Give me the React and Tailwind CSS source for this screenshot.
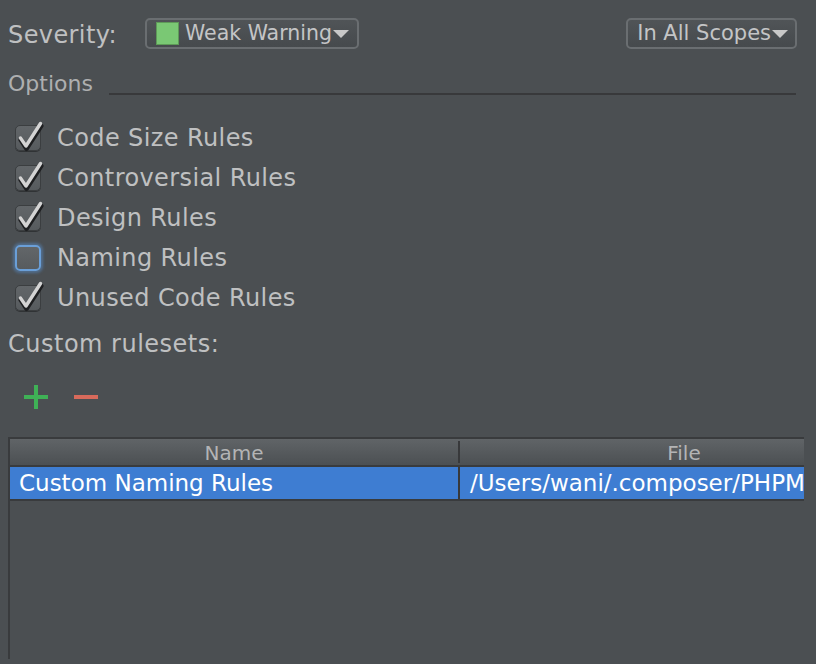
import React from "react";

const font = { fontFamily: '"DejaVu Sans", "Liberation Sans", sans-serif' };

const rules = [
  { label: "Code Size Rules", checked: true },
  { label: "Controversial Rules", checked: true },
  { label: "Design Rules", checked: true },
  { label: "Naming Rules", checked: false, focused: true },
  { label: "Unused Code Rules", checked: true },
];

const Checkbox = ({ checked, focused }) => (
  <div className="relative w-[28px] h-[28px]">
    <div
      className={`absolute left-[1px] top-[1px] w-[26px] h-[26px] rounded-[5px] bg-gradient-to-b from-[#626669] to-[#575b5e] ${
        focused
          ? "border-2 border-[#6a9fd8] shadow-[0_0_3px_2px_rgba(90,150,220,0.45)]"
          : "border border-[#3b3e40] shadow-[0_1px_0_rgba(0,0,0,0.35)]"
      }`}
    />
    {checked && (
      <svg
        className="absolute left-0 top-[-4px] overflow-visible"
        width="30"
        height="32"
        viewBox="0 0 30 32"
      >
        <path
          d="M7 20 L12.5 28.5 L27 6"
          fill="none"
          stroke="#1e1f21"
          strokeWidth="5"
          strokeLinecap="round"
          strokeLinejoin="round"
        />
        <path
          d="M6.5 18 L12 26 L26.5 3.5"
          fill="none"
          stroke="#d4d4d4"
          strokeWidth="3.4"
          strokeLinecap="round"
          strokeLinejoin="round"
        />
      </svg>
    )}
  </div>
);

const Combo = ({ children, className }) => (
  <div
    className={`h-[31px] flex items-center rounded-[5px] border-2 border-[#6a6e71] bg-gradient-to-b from-[#505457] to-[#464a4d] whitespace-nowrap ${className}`}
  >
    {children}
    <svg width="16" height="9" viewBox="0 0 16 9" className="ml-[1px] mt-[1px] shrink-0">
      <path d="M0 0 H16 L8 8 Z" fill="#c8c8c8" />
    </svg>
  </div>
);

export default function App() {
  return (
    <div
      className="w-[816px] h-[664px] bg-[#4b4f52] text-[#bfc0c1] overflow-hidden relative"
      style={font}
    >
      {/* severity row */}
      <div className="flex items-center h-[49px] pt-[18px] pl-[8px] pr-[19px]">
        <span className="text-[24px] tracking-[0.4px] h-[31px] pt-[3px] leading-[28px] w-[137px]">
          Severity:
        </span>
        <Combo className="pl-[9px] pr-[8px]">
          <div className="w-[23px] h-[23px] bg-[#7ac874] border border-[#5e9a58] mr-[6px] shrink-0" />
          <span className="text-[20.5px] leading-[27px] text-[#c4c5c6]">Weak Warning</span>
        </Combo>
        <div className="flex-1" />
        <Combo className="pl-[9px] pr-[7px]">
          <span className="text-[21px] leading-[27px] text-[#c4c5c6]">In All Scopes</span>
        </Combo>
      </div>

      {/* options header */}
      <div className="flex items-end mt-[22px] pl-[8px] pr-[20px] h-[26px]">
        <span className="text-[22px] leading-[26px] text-[#aeafb0]">Options</span>
        <div className="flex-1 ml-[16px] mb-[2px] h-[2px] bg-[#38393b]" />
      </div>

      {/* rule checkboxes */}
      <div className="flex flex-col mt-[21px] pl-[14px]">
        {rules.map((r) => (
          <div key={r.label} className="flex items-center h-[40px]">
            <Checkbox checked={r.checked} focused={r.focused} />
            <span className="ml-[15px] text-[24px] tracking-[0.4px] leading-[30px]">{r.label}</span>
          </div>
        ))}
      </div>

      {/* custom rulesets */}
      <div className="pl-[8px] mt-[10px] text-[24px] tracking-[0.5px] leading-[32px]">
        Custom rulesets:
      </div>

      <div className="flex items-center h-[30px] mt-[22px] pl-[24px] gap-[26px]">
        <svg width="24" height="24" viewBox="0 0 24 24">
          <path d="M12 0 V24 M0 12 H24" stroke="#3fb156" strokeWidth="4" />
        </svg>
        <svg width="24" height="24" viewBox="0 0 24 24">
          <path d="M0 12 H24" stroke="#d86a5b" strokeWidth="4" />
        </svg>
      </div>

      {/* table */}
      <div className="ml-[8px] mt-[25px] w-[796px] h-[222px] overflow-hidden border-t-2 border-l-2 border-[#393b3d]">
        <div className="w-[900px]">
          <div className="flex h-[28px] bg-gradient-to-b from-[#606467] to-[#4c5053] border-b-2 border-[#393b3d] text-[20px] leading-[28px] text-[#b3b4b5]">
            <div className="w-[448px] text-center">Name</div>
            <div className="w-[2px] bg-[#38393b] my-[2px]" />
            <div className="w-[448px] text-center">File</div>
          </div>
          <div className="flex h-[34px] bg-[#3e7dd2] border-b-2 border-[#393b3d] text-white text-[23px] leading-[32px]">
            <div className="w-[448px] pl-[9px] whitespace-nowrap">Custom Naming Rules</div>
            <div className="w-[2px] bg-[#38393b]" />
            <div className="w-[448px] pl-[10px] whitespace-nowrap">
              /Users/wani/.composer/PHPMD/rulesets/naming.xml
            </div>
          </div>
        </div>
      </div>
    </div>
  );
}
